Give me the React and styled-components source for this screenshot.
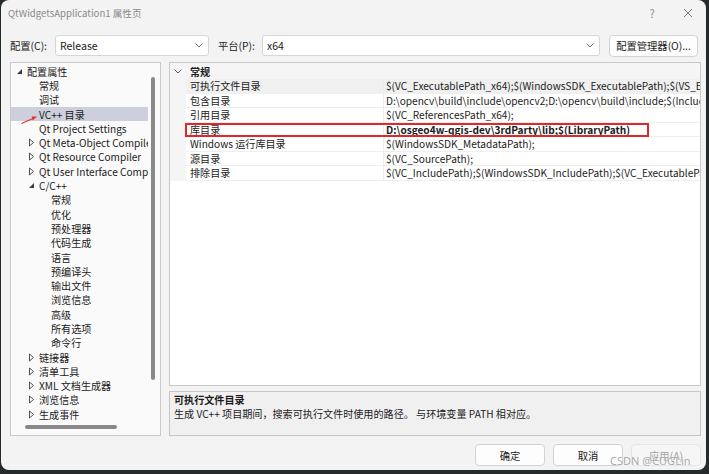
import React from "react";
import styled, { createGlobalStyle } from "styled-components";

const GlobalStyle = createGlobalStyle`
  html, body { margin: 0; padding: 0; }
  body {
    width: 709px;
    height: 474px;
    overflow: hidden;
    background: #252a2a;
    font-family: "Noto Sans CJK SC", sans-serif;
  }
`;

const treeItems = [
  { level: 0, label: "配置属性", toggle: "open" },
  { level: 1, label: "常规" },
  { level: 1, label: "调试" },
  { level: 1, label: "VC++ 目录", selected: true },
  { level: 1, label: "Qt Project Settings" },
  { level: 1, label: "Qt Meta-Object Compiler", toggle: "closed" },
  { level: 1, label: "Qt Resource Compiler", toggle: "closed" },
  { level: 1, label: "Qt User Interface Compiler", toggle: "closed" },
  { level: 1, label: "C/C++", toggle: "open" },
  { level: 2, label: "常规" },
  { level: 2, label: "优化" },
  { level: 2, label: "预处理器" },
  { level: 2, label: "代码生成" },
  { level: 2, label: "语言" },
  { level: 2, label: "预编译头" },
  { level: 2, label: "输出文件" },
  { level: 2, label: "浏览信息" },
  { level: 2, label: "高级" },
  { level: 2, label: "所有选项" },
  { level: 2, label: "命令行" },
  { level: 1, label: "链接器", toggle: "closed" },
  { level: 1, label: "清单工具", toggle: "closed" },
  { level: 1, label: "XML 文档生成器", toggle: "closed" },
  { level: 1, label: "浏览信息", toggle: "closed" },
  { level: 1, label: "生成事件", toggle: "closed" },
];

const props = [
  {
    name: "可执行文件目录",
    value: "$(VC_ExecutablePath_x64);$(WindowsSDK_ExecutablePath);$(VS_ExecutablePath);$(MSBuild_ExecutablePath)",
    selected: true,
  },
  {
    name: "包含目录",
    value: "D:\\opencv\\build\\include\\opencv2;D:\\opencv\\build\\include;$(IncludePath)",
  },
  { name: "引用目录", value: "$(VC_ReferencesPath_x64);" },
  {
    name: "库目录",
    value: "D:\\osgeo4w-qgis-dev\\3rdParty\\lib;$(LibraryPath)",
    bold: true,
    marked: true,
  },
  { name: "Windows 运行库目录", value: "$(WindowsSDK_MetadataPath);" },
  { name: "源目录", value: "$(VC_SourcePath);" },
  {
    name: "排除目录",
    value: "$(VC_IncludePath);$(WindowsSDK_IncludePath);$(VC_ExecutablePath_x64)",
  },
];

const App = () => {
  return (
    <>
      <GlobalStyle />
      <Window>
        <TitleBar>
          <Title>QtWidgetsApplication1 属性页</Title>
          <TitleButton>?</TitleButton>
          <TitleButton>
            <svg width="10" height="10" viewBox="0 0 10 10">
              <path d="M1 1 L9 9 M9 1 L1 9" stroke="#7a7a7a" strokeWidth="1" />
            </svg>
          </TitleButton>
        </TitleBar>

        <ConfigRow>
          <FieldLabel $w={45}>配置(C):</FieldLabel>
          <Combo $w={154}>
            Release
            <Chevron />
          </Combo>
          <FieldLabel $w={44} $gap={9}>平台(P):</FieldLabel>
          <Combo $w={338}>
            x64
            <Chevron />
          </Combo>
          <Button $w={89} $gap={9}>配置管理器(O)...</Button>
        </ConfigRow>

        <Main>
          <TreePanel>
            <TreeList>
              {treeItems.map((it, i) => (
                <TreeRow key={i} $level={it.level} $selected={it.selected}>
                  <Toggle>
                    {it.toggle === "open" && (
                      <svg width="7" height="7" viewBox="0 0 7 7">
                        <polygon points="6,1 6,6 1,6" fill="#3c3c3c" />
                      </svg>
                    )}
                    {it.toggle === "closed" && (
                      <svg width="7" height="9" viewBox="0 0 7 9">
                        <polygon points="1.5,1 5.5,4.5 1.5,8" fill="none" stroke="#505050" strokeWidth="1" />
                      </svg>
                    )}
                  </Toggle>
                  {it.label}
                </TreeRow>
              ))}
            </TreeList>
            <VTrack>
              <VThumb />
            </VTrack>
            <HTrack>
              <HThumb />
            </HTrack>
          </TreePanel>

          <RightCol>
            <PropGrid>
              <GroupRow>
                <Gutter $center>
                  <svg width="8" height="5" viewBox="0 0 8 5">
                    <polyline points="0.5,0.5 4,4 7.5,0.5" fill="none" stroke="#555" strokeWidth="1" />
                  </svg>
                </Gutter>
                <GroupTitle>常规</GroupTitle>
              </GroupRow>
              {props.map((p, i) => (
                <PropRow key={i} $selected={p.selected}>
                  <Gutter />
                  <NameCell>{p.name}</NameCell>
                  <ValueCell $bold={p.bold}>{p.value}</ValueCell>
                  {p.marked && <Marker />}
                </PropRow>
              ))}
            </PropGrid>
            <Description>
              <DescTitle>可执行文件目录</DescTitle>
              <DescText>生成 VC++ 项目期间，搜索可执行文件时使用的路径。 与环境变量 PATH 相对应。</DescText>
            </Description>
          </RightCol>
        </Main>

        <Footer>
          <Button $w={70}>确定</Button>
          <Button $w={70}>取消</Button>
          <Button $w={70} $disabled>应用(A)</Button>
        </Footer>

        <Arrow width="22" height="14" viewBox="0 0 22 14">
          <line x1="2.5" y1="10.5" x2="14" y2="5.5" stroke="#e5322d" strokeWidth="1.2" />
          <polygon points="18,3.6 12.6,3.6 13.8,7.6" fill="#e5322d" />
        </Arrow>
        <Watermark>CSDN @CUGLin</Watermark>
      </Window>
    </>
  );
};

export default App;

const Window = styled.div`
  position: relative;
  margin-left: 1px;
  width: 705px;
  height: 470px;
  background: #f3f3f3;
  border-radius: 8px;
  display: flex;
  flex-direction: column;
  overflow: hidden;
  color: #1b1b1b;
  font-size: 10.1px;
`;

const TitleBar = styled.div`
  display: flex;
  align-items: center;
  height: 26px;
  padding-left: 7px;
`;

const Title = styled.div`
  flex: 1;
  color: #8a8a8a;
  font-size: 9.6px;
`;

const TitleButton = styled.div`
  width: 36px;
  display: flex;
  justify-content: center;
  align-items: center;
  color: #8a8a8a;
  font-size: 11px;
`;

const ConfigRow = styled.div`
  display: flex;
  align-items: center;
  margin-top: 9px;
  height: 21px;
  padding-left: 9px;
`;

const FieldLabel = styled.div`
  width: ${(p) => p.$w}px;
  margin-left: ${(p) => p.$gap || 0}px;
  font-size: 10.3px;
`;

const Combo = styled.div`
  position: relative;
  box-sizing: border-box;
  width: ${(p) => p.$w}px;
  height: 21px;
  display: flex;
  align-items: center;
  padding-left: 4px;
  background: #fff;
  border: 1px solid #d6d6d6;
  border-radius: 3px;
  font-size: 10.5px;
`;

const ChevronSvg = styled.svg`
  margin-left: auto;
  margin-right: 5px;
`;

const Chevron = () => (
  <ChevronSvg width="8" height="5" viewBox="0 0 8 5">
    <polyline points="0.5,0.5 4,4 7.5,0.5" fill="none" stroke="#777" strokeWidth="1" />
  </ChevronSvg>
);

const Button = styled.div`
  box-sizing: border-box;
  width: ${(p) => p.$w}px;
  height: 22px;
  margin-left: ${(p) => p.$gap || 0}px;
  display: flex;
  align-items: center;
  justify-content: center;
  background: ${(p) => (p.$disabled ? "#f6f6f6" : "#fdfdfd")};
  border: 1px solid ${(p) => (p.$disabled ? "#e6e6e6" : "#d3d3d3")};
  border-radius: 4px;
  color: ${(p) => (p.$disabled ? "#a3a3a3" : "#1b1b1b")};
  font-size: 10.3px;
`;

const Main = styled.div`
  display: flex;
  gap: 8px;
  margin-top: 6px;
  height: 374px;
  padding: 0 5px 0 9px;
`;

const TreePanel = styled.div`
  box-sizing: border-box;
  width: 151px;
  border: 1px solid #c9c9c9;
  background: #fafafa;
  display: grid;
  grid-template-columns: 137px 12px;
  grid-template-rows: 1fr 12px;
  overflow: hidden;
`;

const TreeList = styled.div`
  padding-top: 1px;
  overflow: hidden;
`;

const TreeRow = styled.div`
  display: flex;
  align-items: center;
  height: 14.3px;
  padding-left: ${(p) => 5 + p.$level * 12}px;
  white-space: nowrap;
  background: ${(p) => (p.$selected ? "#cdcfdc" : "transparent")};
`;

const Toggle = styled.span`
  width: 11px;
  flex: none;
  display: flex;
  align-items: center;
`;

const VTrack = styled.div`
  display: flex;
  flex-direction: column;
  padding: 14px 0 0 3px;
`;

const VThumb = styled.div`
  width: 4px;
  height: 303px;
  border-radius: 2px;
  background: #898989;
`;

const HTrack = styled.div`
  padding: 2px 0 0 14px;
`;

const HThumb = styled.div`
  width: 92px;
  height: 4px;
  border-radius: 2px;
  background: #898989;
`;

const RightCol = styled.div`
  flex: 1;
  display: flex;
  flex-direction: column;
  gap: 5px;
`;

const PropGrid = styled.div`
  box-sizing: border-box;
  height: 324px;
  border: 1px solid #c9c9c9;
  background: #fff;
  overflow: hidden;
`;

const GroupRow = styled.div`
  display: grid;
  grid-template-columns: 16px 1fr;
  height: 16px;
  background: #f5f5f5;
  align-items: center;
`;

const GroupTitle = styled.div`
  padding-left: 4px;
  font-weight: bold;
`;

const PropRow = styled.div`
  position: relative;
  display: grid;
  grid-template-columns: 16px 198px 1fr;
  height: 14.5px;
  background: ${(p) => (p.$selected ? "#f0f0f0" : "#fff")};
`;

const Gutter = styled.div`
  background: #f5f5f5;
  display: flex;
  align-items: center;
  justify-content: ${(p) => (p.$center ? "center" : "flex-start")};
  height: 100%;
`;

const NameCell = styled.div`
  box-sizing: border-box;
  padding-left: 4px;
  border-right: 1px solid #ececec;
  border-bottom: 1px solid #efefef;
  line-height: 13.5px;
  white-space: nowrap;
  overflow: hidden;
`;

const ValueCell = styled.div`
  box-sizing: border-box;
  padding-left: 2px;
  border-bottom: 1px solid #efefef;
  line-height: 13.5px;
  white-space: nowrap;
  overflow: hidden;
  font-weight: ${(p) => (p.$bold ? "bold" : "normal")};
`;

const Marker = styled.div`
  position: absolute;
  left: 15px;
  top: 0;
  width: 464px;
  height: 14px;
  box-sizing: border-box;
  border: 2px solid #e3262b;
`;

const Description = styled.div`
  box-sizing: border-box;
  height: 45px;
  border: 1px solid #c6c6c6;
  background: #f0f0f0;
  padding: 1px 0 0 4px;
`;

const DescTitle = styled.div`
  font-weight: bold;
  line-height: 14px;
`;

const DescText = styled.div`
  line-height: 14px;
`;

const Footer = styled.div`
  display: flex;
  justify-content: flex-end;
  gap: 8px;
  margin-top: 8px;
  padding-right: 5px;
`;

const Arrow = styled.svg`
  position: absolute;
  left: 18px;
  top: 113px;
`;

const Watermark = styled.div`
  position: absolute;
  left: 609px;
  top: 453px;
  font-family: "Noto Sans", sans-serif;
  font-size: 11px;
  color: rgba(130, 130, 130, 0.7);
  text-shadow: 0 0 1px #fff;
`;
